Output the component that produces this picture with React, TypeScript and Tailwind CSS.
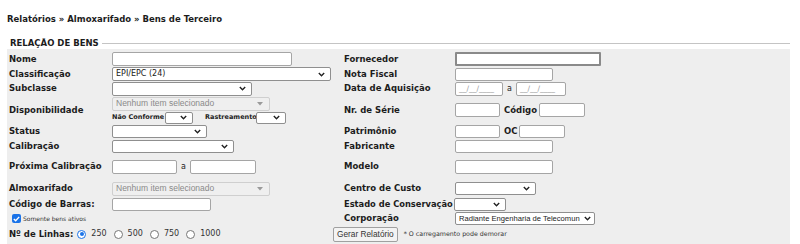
import React from "react";

const Chevron = () => (
  <svg width="7" height="5" viewBox="0 0 7 5" className="shrink-0">
    <path d="M0.8 1 L3.5 3.7 L6.2 1" fill="none" stroke="#222" strokeWidth="1.4" />
  </svg>
);

function Select({ w, h = 14, text = "", font = "", pr = "pr-[5px]" }: { w: number; h?: number; text?: string; font?: string; pr?: string }) {
  return (
    <div
      className={"flex items-center justify-between bg-white border border-[#8f8f8f] rounded-[2px] pl-[3px] text-[8px] text-[#222] overflow-hidden whitespace-nowrap " + pr}
      style={{ width: w, height: h }}
    >
      <span className={"min-w-0 flex-1 overflow-hidden " + font}>{text}</span>
      <Chevron />
    </div>
  );
}

function Input({ w, h = 14, strong = false, placeholder = "" }: { w: number; h?: number; strong?: boolean; placeholder?: string }) {
  return (
    <div
      className={
        strong
          ? "bg-white border-2 border-[#8a8a8a] rounded-[1px] flex items-center"
          : "bg-white border border-[#a5a5a5] rounded-[2px] flex items-center pl-[3px] text-[7.5px] text-[#9a9a9a]"
      }
      style={{ width: w, height: h }}
    >
      {placeholder}
    </div>
  );
}

function Multi({ w }: { w: number }) {
  return (
    <div
      className="flex items-center justify-between h-[14px] bg-[#efefef] border border-[#cfcfcf] rounded-[2px] pl-[3px] pr-[6px] font-['Liberation_Sans',sans-serif] text-[8.5px] text-[#8a8a8a]"
      style={{ width: w }}
    >
      <span>Nenhum item selecionado</span>
      <svg width="6" height="4" viewBox="0 0 6 4">
        <path d="M0 0 L6 0 L3 3.5 Z" fill="#9a9a9a" />
      </svg>
    </div>
  );
}

const Label = ({ children }: { children: React.ReactNode }) => (
  <div className="font-bold text-[8.5px] text-[#1c1c1c] whitespace-nowrap">{children}</div>
);

function Radio({ checked, label }: { checked?: boolean; label: string }) {
  return (
    <div className="flex items-center">
      {checked ? (
        <span className="w-[9px] h-[9px] rounded-full border-[1.5px] border-[#1a73e8] bg-white flex items-center justify-center">
          <span className="w-[4px] h-[4px] rounded-full bg-[#1a73e8]" />
        </span>
      ) : (
        <span className="w-[9px] h-[9px] rounded-full border border-[#767676] bg-white" />
      )}
      <span className="ml-[5px] text-[8px] text-[#333]">{label}</span>
    </div>
  );
}

export default function App() {
  return (
    <div className="w-[800px] h-[244px] bg-white overflow-hidden font-['DejaVu_Sans',sans-serif] text-[#1c1c1c]">
      <div className="pl-[7px] pt-[14px] h-[25px] text-[8.5px] font-bold leading-[11px]">
        Relatórios » Almoxarifado » Bens de Terceiro
      </div>
      <div className="flex items-center pl-[10px] w-[790px] h-[11px] mt-[13px]">
        <span className="text-[8.5px] font-bold leading-[11px]">RELAÇÃO DE BENS</span>
        <div className="flex-1 h-px bg-[#c4c4c4] ml-[3px]" />
      </div>
      <div className="ml-[7px] w-[783px] h-[200px] bg-[#eeeeee] pt-[2px]">
        <div className="grid grid-cols-[103px_232px_111px_1fr] grid-rows-[16px_14px_15px_28px_15px_14px_27px_17px_14px_15px] items-center pl-[2px]">
          {/* row 1 */}
          <Label>Nome</Label>
          <Input w={180} />
          <Label>Fornecedor</Label>
          <Input w={146} strong />
          {/* row 2 */}
          <Label>Classificação</Label>
          <Select w={219} text="EPI/EPC (24)" />
          <Label>Nota Fiscal</Label>
          <Input w={98} h={13} />
          {/* row 3 */}
          <Label>Subclasse</Label>
          <Select w={140} />
          <Label>Data de Aquisição</Label>
          <div className="flex items-center">
            <Input w={48} placeholder="__/__/____" />
            <span className="mx-[4px] text-[8px]">a</span>
            <Input w={50} placeholder="__/__/____" />
          </div>
          {/* row 4 */}
          <Label>Disponibilidade</Label>
          <div className="flex flex-col">
            <Multi w={158} />
            <div className="flex items-center mt-[1px] h-[12px]">
              <span className="font-bold text-[6.5px] w-[53px]">Não Conforme</span>
              <Select w={28} h={12} />
              <span className="font-bold text-[6.5px] ml-[12px] w-[51px]">Rastreamento</span>
              <Select w={30} h={12} />
            </div>
          </div>
          <Label>Nr. de Série</Label>
          <div className="flex items-center">
            <Input w={45} />
            <span className="ml-[4px] mr-[2px]">
              <Label>Código</Label>
            </span>
            <Input w={46} />
          </div>
          {/* row 5 */}
          <Label>Status</Label>
          <Select w={95} h={13} />
          <Label>Patrimônio</Label>
          <div className="flex items-center">
            <Input w={45} h={13} />
            <span className="ml-[4px] mr-[2px]">
              <Label>OC</Label>
            </span>
            <Input w={46} h={13} />
          </div>
          {/* row 6 */}
          <Label>Calibração</Label>
          <Select w={122} h={13} />
          <Label>Fabricante</Label>
          <Input w={98} h={13} />
          {/* row 7 */}
          <Label>Próxima Calibração</Label>
          <div className="flex items-center">
            <Input w={65} />
            <span className="mx-[4px] text-[8px]">a</span>
            <Input w={66} />
          </div>
          <Label>Modelo</Label>
          <Input w={98} />
          {/* row 8 */}
          <Label>Almoxarifado</Label>
          <Multi w={158} />
          <Label>Centro de Custo</Label>
          <Select w={81} h={13} />
          {/* row 9 */}
          <Label>Código de Barras:</Label>
          <Input w={99} h={13} />
          <div className="font-bold text-[8.3px] text-[#1c1c1c] whitespace-nowrap">Estado de Conservação</div>
          <div className="-ml-[1px]">
            <Select w={52} h={13} />
          </div>
          {/* row 10 */}
          <div className="col-span-2 flex items-center pl-[3px]">
            <span className="w-[9px] h-[9px] rounded-[2px] bg-[#1a73e8] flex items-center justify-center">
              <svg width="7" height="6" viewBox="0 0 7 6">
                <path d="M0.8 3 L2.7 4.8 L6.2 0.9" fill="none" stroke="#fff" strokeWidth="1.4" />
              </svg>
            </span>
            <span className="ml-[2px] text-[6px] text-[#333]">Somente bens ativos</span>
          </div>
          <Label>Corporação</Label>
          <Select
            w={140}
            h={13}
            pr="pr-[3px]"
            text="Radiante Engenharia de Telecomun"
            font="font-['Liberation_Sans',sans-serif] text-[7.6px]"
          />
        </div>
        {/* row 11 */}
        <div className="flex items-center h-[16px] pl-[2px]">
          <div className="flex items-center w-[324px]">
            <span className="font-bold text-[8.5px] mr-[4px]">Nº de Linhas:</span>
            <div className="flex items-center gap-[7px]">
              <Radio checked label="250" />
              <Radio label="500" />
              <Radio label="750" />
              <Radio label="1000" />
            </div>
          </div>
          <button className="h-[15px] px-[3px] border border-[#a0a0a0] rounded-[2px] bg-[#f3f3f3] font-['Liberation_Sans',sans-serif] text-[8.3px] text-[#333] leading-none">
            Gerar Relatório
          </button>
          <span className="ml-[6px] text-[6.3px] text-[#333]">* O carregamento pode demorar</span>
        </div>
      </div>
    </div>
  );
}
